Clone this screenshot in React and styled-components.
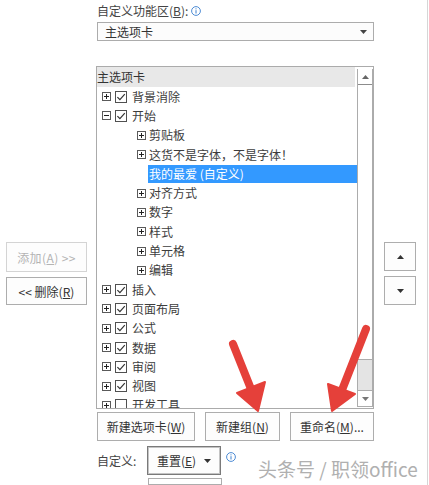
import React from 'react';
import styled, { createGlobalStyle } from 'styled-components';

const GlobalStyle = createGlobalStyle`
    html, body {
        margin: 0;
        padding: 0;
        background: #fff;
    }
    body {
        font-family: "Noto Sans CJK SC", "Noto Sans", sans-serif;
        font-size: 12px;
        color: #3d3d3d;
    }
`;

const Page = styled.div`
    position: relative;
    display: flex;
    width: 427px;
    height: 485px;
    overflow: hidden;
    border-right: 1px solid #d6d6d6;
`;

const SideColumn = styled.div`
    display: flex;
    flex-direction: column;
    gap: 5px;
    padding-top: 242px;
    padding-left: ${p => p.$left}px;
    width: ${p => p.$width}px;
    box-sizing: border-box;
`;

const MiddleColumn = styled.div`
    display: flex;
    flex-direction: column;
    width: 278px;
    flex-shrink: 0;
`;

const Label = styled.div`
    display: flex;
    align-items: center;
    gap: 3px;
    height: 16px;
    margin-top: 3px;
    padding-left: 1px;
    line-height: 16px;
    color: #444;
`;

const Key = styled.span`
    text-decoration: underline;
`;

const Dropdown = styled.div`
    display: flex;
    align-items: center;
    justify-content: space-between;
    height: 22px;
    margin-top: 3px;
    margin-left: 1px;
    padding: 0 6px 0 7px;
    border: 1px solid #acacac;
    background: #fcfcfc;
    box-sizing: border-box;
    color: #333;
`;

const TreeBox = styled.div`
    display: flex;
    height: 343px;
    margin-top: 25px;
    border: 1px solid #ababab;
    box-sizing: border-box;
`;

const TreeList = styled.div`
    flex: 1;
    overflow: hidden;
`;

const TreeHeader = styled.div`
    height: 19px;
    margin-right: 2px;
    padding-top: 1px;
    line-height: 18px;
    background: #e8e8e8;
    color: #333;
`;

const Row = styled.div`
    display: flex;
    align-items: center;
    height: 19.3px;
    padding-left: ${p => p.$indent}px;
    gap: ${p => p.$gap}px;
`;

const RowText = styled.span`
    flex: ${p => (p.$selected ? 1 : 'none')};
    padding-left: 1px;
    line-height: 18px;
    white-space: nowrap;
    background: ${p => (p.$selected ? '#3399ff' : 'transparent')};
    color: ${p => (p.$selected ? '#fff' : '#3d3d3d')};
`;

const Scrollbar = styled.div`
    display: flex;
    flex-direction: column;
    width: 16px;
    margin: 2px 0 1px;
    border-left: 1px solid #acacac;
    border-right: 1px solid #acacac;
    box-sizing: border-box;
`;

const ScrollButton = styled.div`
    display: flex;
    align-items: center;
    justify-content: center;
    height: ${p => p.$h}px;
    background: #fff;
    border-top: ${p => (p.$down ? '1px solid #acacac' : 'none')};
    border-bottom: 1px solid ${p => (p.$down ? '#acacac' : '#8c8c8c')};
    box-sizing: border-box;
`;

const Thumb = styled.div`
    height: 275px;
    background: #fff;
    border-bottom: 1px solid #acacac;
    box-sizing: border-box;
`;

const Track = styled.div`
    flex: 1;
    background: #e4e4e4;
`;

const Button = styled.div`
    display: flex;
    align-items: center;
    justify-content: center;
    width: ${p => p.$w}px;
    height: ${p => p.$h || 29}px;
    border: 1px solid ${p => (p.$disabled ? '#d4d4d4' : '#adadad')};
    background: #fdfdfd;
    color: ${p => (p.$disabled ? '#b4b4b4' : '#333')};
    box-sizing: border-box;
    white-space: nowrap;
    letter-spacing: ${p => (p.$disabled ? 0.4 : 0)}px;
`;

const ButtonRow = styled.div`
    display: flex;
    gap: 10px;
    margin-top: 3px;
    padding-left: 1px;
`;

const BottomRow = styled.div`
    display: flex;
    align-items: center;
    margin-top: 5px;
    padding-left: 1px;
`;

const BottomLabel = styled.span`
    width: 50px;
    color: #444;
`;

const ResetButton = styled(Button)`
    gap: 8px;
    border: 1px solid #7a7a7a;
    box-shadow: inset 0 0 0 1px #c4c4c4;
`;

const InfoWrap = styled.span`
    display: flex;
    margin: -8px 0 0 5px;
`;

const HiddenBox = styled.div`
    width: 72px;
    height: 20px;
    margin: 3px 0 0 52px;
    border: 1px solid #adadad;
`;

const Watermark = styled.div`
    position: absolute;
    left: 258px;
    top: 456px;
    font-size: 19px;
    line-height: 26px;
    color: #b0b0b0;
    text-shadow: 0 0 2px #fff;
    white-space: nowrap;
`;

const Overlay = styled.svg`
    position: absolute;
    left: 0;
    top: 0;
    pointer-events: none;
`;

const Expander = ({ open }) => (
    <svg width="9" height="9" viewBox="0 0 9 9">
        <rect x="0.5" y="0.5" width="8" height="8" fill="#fff" stroke="#5a5a5a" />
        <path d="M2 4.5h5" stroke="#222" />
        {!open && <path d="M4.5 2v5" stroke="#222" />}
    </svg>
);

const Check = ({ on }) => (
    <svg width="12" height="12" viewBox="0 0 12 12">
        <rect x="0.5" y="0.5" width="11" height="11" fill="#fff" stroke="#505050" />
        {on && <path d="M2.4 6.2L4.9 8.7L9.8 3.2" fill="none" stroke="#333" strokeWidth="1.2" />}
    </svg>
);

const Triangle = ({ up, color = '#555' }) => (
    <svg width="7" height="4" viewBox="0 0 7 4">
        <path d={up ? 'M0 4L3.5 0L7 4Z' : 'M0 0L7 0L3.5 4Z'} fill={color} />
    </svg>
);

const Info = () => (
    <svg width="10" height="10" viewBox="0 0 10 10">
        <circle cx="5" cy="5" r="4.4" fill="none" stroke="#3a7fcf" strokeWidth="0.9" />
        <path d="M5 4.2v3.3" stroke="#3a7fcf" strokeWidth="1" />
        <circle cx="5" cy="2.8" r="0.6" fill="#3a7fcf" />
    </svg>
);

const tree = [
    { level: 0, label: '背景消除', check: true },
    { level: 0, label: '开始', check: true, open: true },
    { level: 1, label: '剪贴板' },
    { level: 1, label: '这货不是字体，不是字体！' },
    { level: 1, label: '我的最爱 (自定义)', selected: true },
    { level: 1, label: '对齐方式' },
    { level: 1, label: '数字' },
    { level: 1, label: '样式' },
    { level: 1, label: '单元格' },
    { level: 1, label: '编辑' },
    { level: 0, label: '插入', check: true },
    { level: 0, label: '页面布局', check: true },
    { level: 0, label: '公式', check: true },
    { level: 0, label: '数据', check: true },
    { level: 0, label: '审阅', check: true },
    { level: 0, label: '视图', check: true },
    { level: 0, label: '开发工具', check: false },
];

const TreeRow = ({ item }) => {
    if (item.level === 0) {
        return (
            <Row $indent={5} $gap={4}>
                <Expander open={item.open} />
                <Check on={item.check} />
                <RowText>{item.label}</RowText>
            </Row>
        );
    }
    return (
        <Row $indent={40} $gap={2}>
            <span style={{ visibility: item.selected ? 'hidden' : 'visible', display: 'flex' }}>
                <Expander />
            </span>
            <RowText $selected={item.selected}>{item.label}</RowText>
        </Row>
    );
};

const Arrow = ({ tail, end, head }) => (
    <g>
        <line x1={tail[0]} y1={tail[1]} x2={end[0]} y2={end[1]} stroke="#e5403a" strokeWidth="8" strokeLinecap="round" />
        <polygon points={head.map(p => p.join(',')).join(' ')} fill="#e5403a" stroke="#e5403a" strokeWidth="2" strokeLinejoin="round" />
    </g>
);

const App = () => (
    <>
        <GlobalStyle />
        <Page>
            <SideColumn $left={6} $width={96}>
                <Button $w={81} $h={30} $disabled>添加(<Key>A</Key>) &gt;&gt;</Button>
                <Button $w={81} $h={28}>&lt;&lt; 删除(<Key>R</Key>)</Button>
            </SideColumn>

            <MiddleColumn>
                <Label>
                    <span>自定义功能区(<Key>B</Key>):</span>
                    <Info />
                </Label>
                <Dropdown>
                    <span>主选项卡</span>
                    <Triangle color="#444" />
                </Dropdown>

                <TreeBox>
                    <TreeList>
                        <TreeHeader>主选项卡</TreeHeader>
                        {tree.map(item => <TreeRow key={item.label} item={item} />)}
                    </TreeList>
                    <Scrollbar>
                        <ScrollButton $h={16}><Triangle up color="#666" /></ScrollButton>
                        <Thumb />
                        <Track />
                        <ScrollButton $h={17} $down><Triangle color="#777" /></ScrollButton>
                    </Scrollbar>
                </TreeBox>

                <ButtonRow>
                    <Button $w={98}>新建选项卡(<Key>W</Key>)</Button>
                    <Button $w={75}>新建组(<Key>N</Key>)</Button>
                    <Button $w={84}>重命名(<Key>M</Key>)...</Button>
                </ButtonRow>

                <BottomRow>
                    <BottomLabel>自定义:</BottomLabel>
                    <ResetButton $w={74}>
                        <span>重置(<Key>E</Key>)</span>
                        <Triangle color="#333" />
                    </ResetButton>
                    <InfoWrap><Info /></InfoWrap>
                </BottomRow>
                <HiddenBox />
            </MiddleColumn>

            <SideColumn $left={10} $width={52}>
                <Button $w={32}><Triangle up color="#333" /></Button>
                <Button $w={32}><Triangle color="#333" /></Button>
            </SideColumn>

            <Watermark>头条号 / 职领office</Watermark>

            <Overlay width="429" height="485" viewBox="0 0 429 485">
                <Arrow tail={[233, 344]} end={[251, 389]} head={[[237, 393], [265, 382], [258, 411]]} />
                <Arrow tail={[366, 329]} end={[342, 390]} head={[[328, 384], [355, 394], [332, 411]]} />
            </Overlay>
        </Page>
    </>
);

export default App;
